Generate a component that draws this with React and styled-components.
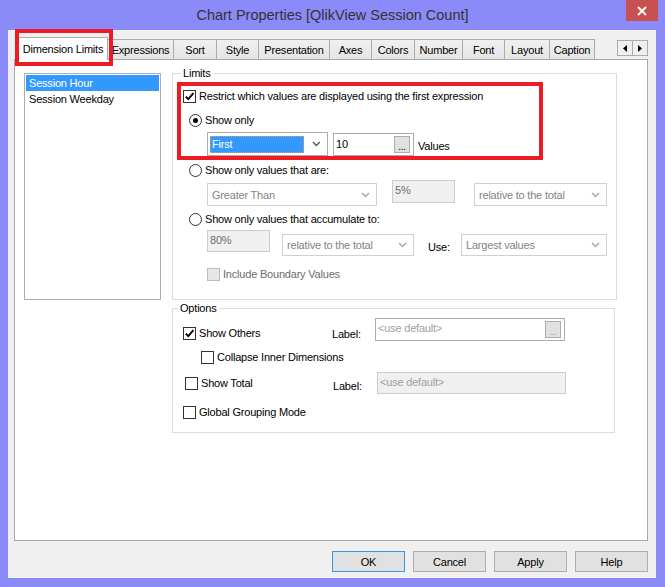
import React from 'react';
import styled, { createGlobalStyle } from 'styled-components';

const GlobalStyle = createGlobalStyle`
  html, body {
    margin: 0;
    padding: 0;
  }
  body {
    font-family: "Liberation Sans", Arial, sans-serif;
    font-size: 11px;
    letter-spacing: -0.2px;
    color: #000;
  }
  * {
    box-sizing: border-box;
  }
`;

const Window = styled.div`
  width: 665px;
  height: 587px;
  background: #8a8af8;
  display: flex;
  flex-direction: column;
  padding: 0 9px 9px 8px;
`;

const TitleBar = styled.div`
  height: 30px;
  margin: 0 -9px 0 -8px;
  display: grid;
  grid-template-columns: 1fr auto 1fr;
  align-items: start;
`;

const Title = styled.div`
  grid-column: 2;
  font-size: 14.5px;
  letter-spacing: 0;
  color: #333;
  line-height: 30px;
  padding-left: 0;
`;

const Close = styled.div`
  grid-column: 3;
  justify-self: end;
  margin-right: 7px;
  width: 32px;
  height: 21px;
  background: #c75050;
  display: flex;
  align-items: center;
  justify-content: center;
`;

const Client = styled.div`
  flex: 1;
  background: #f0f0f0;
  display: flex;
  flex-direction: column;
  padding: 7px 8px 6px 6px;
`;

const TabRow = styled.div`
  height: 22px;
  display: flex;
  align-items: flex-end;
  padding-left: 4px;
`;

const Tab = styled.div`
  position: relative;
  width: ${p => p.$w}px;
  height: ${p => (p.$active ? 23 : 20)}px;
  margin-bottom: ${p => (p.$active ? -1 : 0)}px;
  margin-left: ${p => (p.$first ? 0 : -1)}px;
  z-index: ${p => (p.$active ? 2 : 0)};
  background: ${p => (p.$active ? '#fff' : 'linear-gradient(#f0f0f0, #e5e5e5)')};
  border: 1px solid #acacac;
  border-bottom: none;
  display: flex;
  align-items: center;
  justify-content: center;
  white-space: nowrap;
`;

const Highlight = styled.div`
  position: absolute;
  pointer-events: none;
  border: 4px solid #ed1c24;
  top: ${p => p.$t}px;
  left: ${p => p.$l}px;
  width: ${p => p.$w}px;
  height: ${p => p.$h}px;
`;

const ScrollArrows = styled.div`
  margin-left: auto;
  align-self: flex-start;
  margin-top: 3px;
  display: flex;
`;

const ArrowBtn = styled.div`
  width: 16px;
  height: 16px;
  margin-left: ${p => (p.$second ? -1 : 0)}px;
  border: 1px solid #acacac;
  background: #f0f0f0;
  display: flex;
  align-items: center;
  justify-content: center;
`;

const Panel = styled.div`
  height: 482px;
  background: #fff;
  border: 1px solid #a9a9a9;
  display: flex;
  align-items: flex-start;
  padding: 13px 0 0 9px;
`;

const ListBox = styled.div`
  width: 137px;
  height: 227px;
  border: 1px solid #abadb3;
  padding: 1px;
`;

const ListItem = styled.div`
  height: 16px;
  line-height: 16px;
  padding-left: 3px;
  background: ${p => (p.$selected ? '#3399ff' : 'transparent')};
  color: ${p => (p.$selected ? '#fff' : '#000')};
`;

const Column = styled.div`
  margin-left: 11px;
  display: flex;
  flex-direction: column;
  gap: 8px;
`;

const Group = styled.div`
  position: relative;
  width: ${p => p.$w}px;
  height: ${p => p.$h}px;
  border: 1px solid #dcdcdc;
  display: flex;
  flex-direction: column;
`;

const GroupTitle = styled.span`
  position: absolute;
  top: -7px;
  left: ${p => p.$lx}px;
  padding: 0 2px;
  line-height: 13px;
  background: #fff;
`;

const Row = styled.div`
  display: flex;
  align-items: ${p => p.$align || 'center'};
  margin-top: ${p => p.$mt || 0}px;
  padding-left: ${p => p.$indent || 0}px;
`;

const Item = styled.div`
  display: flex;
  align-items: center;
  gap: 3px;
  line-height: 13px;
  width: ${p => (p.$w ? `${p.$w}px` : 'auto')};
  margin-top: ${p => p.$mt || 0}px;
  margin-left: ${p => p.$ml || 0}px;
  color: ${p => (p.$disabled ? '#6d6d6d' : '#000')};
  white-space: nowrap;
`;

const Box = styled.span`
  width: 13px;
  height: 13px;
  flex: none;
  border: 1px solid ${p => (p.$disabled ? '#bcbcbc' : '#333')};
  background: ${p => (p.$disabled ? '#e6e6e6' : '#fff')};
  display: flex;
  align-items: center;
  justify-content: center;
`;

const Round = styled(Box)`
  border-radius: 50%;
`;

const Dot = styled.span`
  width: 5px;
  height: 5px;
  border-radius: 50%;
  background: #000;
`;

const Combo = styled.div`
  width: ${p => p.$w}px;
  height: ${p => p.$h || 23}px;
  margin-top: ${p => p.$mt || 0}px;
  margin-left: ${p => p.$ml || 0}px;
  border: 1px solid ${p => (p.$disabled ? '#d0d0d0' : '#acacac')};
  background: #fff;
  color: ${p => (p.$disabled ? '#838383' : '#000')};
  display: flex;
  align-items: center;
  padding: 0 6px 0 4px;
  white-space: nowrap;
`;

const ComboText = styled.span`
  flex: 1;
`;

const Focused = styled.span`
  width: 97px;
  height: 17px;
  margin-left: -2px;
  margin-right: 8px;
  background: #3399ff;
  color: #fff;
  outline: 1px dotted #e0a060;
  outline-offset: -1px;
  padding-left: 2px;
  line-height: 17px;
`;

const Edit = styled.div`
  width: ${p => p.$w}px;
  height: ${p => p.$h || 23}px;
  margin-left: ${p => p.$ml || 0}px;
  margin-top: ${p => p.$mt || 0}px;
  border: 1px solid ${p => (p.$disabled ? '#cccccc' : '#acacac')};
  background: ${p => (p.$disabled ? '#f0f0f0' : '#fff')};
  color: ${p => (p.$muted ? '#a0a0a0' : p.$disabled ? '#6d6d6d' : '#000')};
  display: flex;
  align-items: ${p => (p.$center ? 'center' : 'flex-start')};
  justify-content: space-between;
  padding: ${p => (p.$center ? '0 3px 0 2px' : '3px 3px 0 2px')};
  line-height: 13px;
  white-space: nowrap;
`;

const Dots = styled.span`
  width: 16px;
  height: 17px;
  align-self: center;
  margin-top: ${p => p.$mt || 0}px;
  border: 1px solid #adadad;
  background: #e1e1e1;
  display: flex;
  align-items: flex-end;
  justify-content: center;
  line-height: 11px;
  font-size: 10px;
`;

const Text = styled.span`
  display: inline-block;
  width: ${p => (p.$w ? `${p.$w}px` : 'auto')};
  margin-left: ${p => p.$ml || 0}px;
  margin-top: ${p => p.$mt || 0}px;
  line-height: 13px;
  white-space: nowrap;
`;

const LimitsBody = styled.div`
  padding-top: 16px;
  display: flex;
  flex-direction: column;
`;

const OptionsBody = styled.div`
  padding-top: 9px;
  display: flex;
  flex-direction: column;
`;

const ButtonRow = styled.div`
  margin-top: 10px;
  display: flex;
  justify-content: flex-end;
  gap: 8px;
`;

const Button = styled.div`
  width: 73px;
  height: 21px;
  border: 1px solid ${p => (p.$default ? '#3c96e0' : '#adadad')};
  background: #e1e1e1;
  display: flex;
  align-items: center;
  justify-content: center;
`;

const Chevron = ({ disabled }) => (
  <svg width="9" height="6" viewBox="0 0 9 6">
    <path d="M1 1 L4.5 4.5 L8 1" fill="none" stroke={disabled ? '#a8a8a8' : '#555'} strokeWidth="1.5" />
  </svg>
);

const CheckBox = ({ checked, disabled }) => (
  <Box $disabled={disabled}>
    {checked && (
      <svg width="11" height="11" viewBox="0 0 11 11">
        <path d="M1.8 5.6 L4.3 8.2 L9.4 2.2" fill="none" stroke="#000" strokeWidth="1.9" />
      </svg>
    )}
  </Box>
);

const Radio = ({ checked }) => <Round>{checked && <Dot />}</Round>;

const tabs = [
  ['Dimension Limits', 90],
  ['Expressions', 67],
  ['Sort', 44],
  ['Style', 43],
  ['Presentation', 72],
  ['Axes', 43],
  ['Colors', 44],
  ['Number', 49],
  ['Font', 43],
  ['Layout', 46],
  ['Caption', 46],
];

export default function App() {
  return (
    <>
      <GlobalStyle />
      <Window>
        <TitleBar>
          <Title>Chart Properties [QlikView Session Count]</Title>
          <Close>
            <svg width="10" height="10" viewBox="0 0 10 10">
              <path d="M1 1 L9 9 M9 1 L1 9" stroke="#fff" strokeWidth="1.8" />
            </svg>
          </Close>
        </TitleBar>
        <Client>
          <TabRow>
            {tabs.map(([name, w], i) => (
              <Tab key={name} $w={w} $active={i === 0} $first={i === 0}>
                {name}
                {i === 0 && <Highlight $t={-9} $l={-4} $w={98} $h={37} />}
              </Tab>
            ))}
            <ScrollArrows>
              <ArrowBtn>
                <svg width="4" height="7" viewBox="0 0 4 7"><path d="M4 0 L0 3.5 L4 7 Z" fill="#000" /></svg>
              </ArrowBtn>
              <ArrowBtn $second>
                <svg width="4" height="7" viewBox="0 0 4 7"><path d="M0 0 L4 3.5 L0 7 Z" fill="#000" /></svg>
              </ArrowBtn>
            </ScrollArrows>
          </TabRow>
          <Panel>
            <ListBox>
              <ListItem $selected>Session Hour</ListItem>
              <ListItem>Session Weekday</ListItem>
            </ListBox>
            <Column>
              <Group $w={445} $h={227}>
                <GroupTitle $lx={8}>Limits</GroupTitle>
                <Highlight $t={8} $l={4} $w={366} $h={78} />
                <LimitsBody>
                  <Row $indent={10}>
                    <Item>
                      <CheckBox checked />
                      Restrict which values are displayed using the first expression
                    </Item>
                  </Row>
                  <Row $mt={11} $indent={16}>
                    <Item>
                      <Radio checked />
                      Show only
                    </Item>
                  </Row>
                  <Row $mt={5} $indent={34}>
                    <Combo $w={121} $h={24}>
                      <Focused>First</Focused>
                      <Chevron />
                    </Combo>
                    <Edit $w={81} $ml={5} $center>
                      <span>10</span>
                      <Dots>...</Dots>
                    </Edit>
                    <Text $ml={4} $mt={5}>Values</Text>
                  </Row>
                  <Row $mt={8} $indent={16}>
                    <Item>
                      <Radio />
                      Show only values that are:
                    </Item>
                  </Row>
                  <Row $mt={3} $indent={34} $align="flex-start">
                    <Combo $w={170} $mt={3} $disabled>
                      <ComboText>Greater Than</ComboText>
                      <Chevron disabled />
                    </Combo>
                    <Edit $w={63} $ml={15} $disabled>5%</Edit>
                    <Combo $w={133} $mt={3} $ml={19} $disabled>
                      <ComboText>relative to the total</ComboText>
                      <Chevron disabled />
                    </Combo>
                  </Row>
                  <Row $mt={7} $indent={16}>
                    <Item>
                      <Radio />
                      Show only values that accumulate to:
                    </Item>
                  </Row>
                  <Row $mt={4} $indent={34} $align="flex-start">
                    <Edit $w={63} $h={22} $disabled>80%</Edit>
                    <Combo $w={132} $h={22} $mt={4} $ml={12} $disabled>
                      <ComboText>relative to the total</ComboText>
                      <Chevron disabled />
                    </Combo>
                    <Text $w={33} $ml={14} $mt={11}>Use:</Text>
                    <Combo $w={146} $h={22} $mt={4} $disabled>
                      <ComboText>Largest values</ComboText>
                      <Chevron disabled />
                    </Combo>
                  </Row>
                  <Row $mt={12} $indent={34}>
                    <Item $disabled>
                      <CheckBox disabled />
                      Include Boundary Values
                    </Item>
                  </Row>
                </LimitsBody>
              </Group>
              <Group $w={443} $h={125}>
                <GroupTitle $lx={5}>Options</GroupTitle>
                <OptionsBody>
                  <Row $indent={10} $align="flex-start">
                    <Item $w={149} $mt={9}>
                      <CheckBox checked />
                      Show Others
                    </Item>
                    <Text $w={43} $mt={10}>Label:</Text>
                    <Edit $w={190} $muted>
                      <span>&lt;use default&gt;</span>
                      <Dots $mt={-3}>...</Dots>
                    </Edit>
                  </Row>
                  <Row $mt={10} $indent={28}>
                    <Item>
                      <CheckBox />
                      Collapse Inner Dimensions
                    </Item>
                  </Row>
                  <Row $mt={8} $indent={12} $align="flex-start">
                    <Item $w={148} $mt={5}>
                      <CheckBox />
                      Show Total
                    </Item>
                    <Text $w={44} $mt={8}>Label:</Text>
                    <Edit $w={189} $h={22} $disabled $muted>&lt;use default&gt;</Edit>
                  </Row>
                  <Row $mt={12} $indent={10}>
                    <Item>
                      <CheckBox />
                      Global Grouping Mode
                    </Item>
                  </Row>
                </OptionsBody>
              </Group>
            </Column>
          </Panel>
          <ButtonRow>
            <Button $default>OK</Button>
            <Button>Cancel</Button>
            <Button>Apply</Button>
            <Button>Help</Button>
          </ButtonRow>
        </Client>
      </Window>
    </>
  );
}
